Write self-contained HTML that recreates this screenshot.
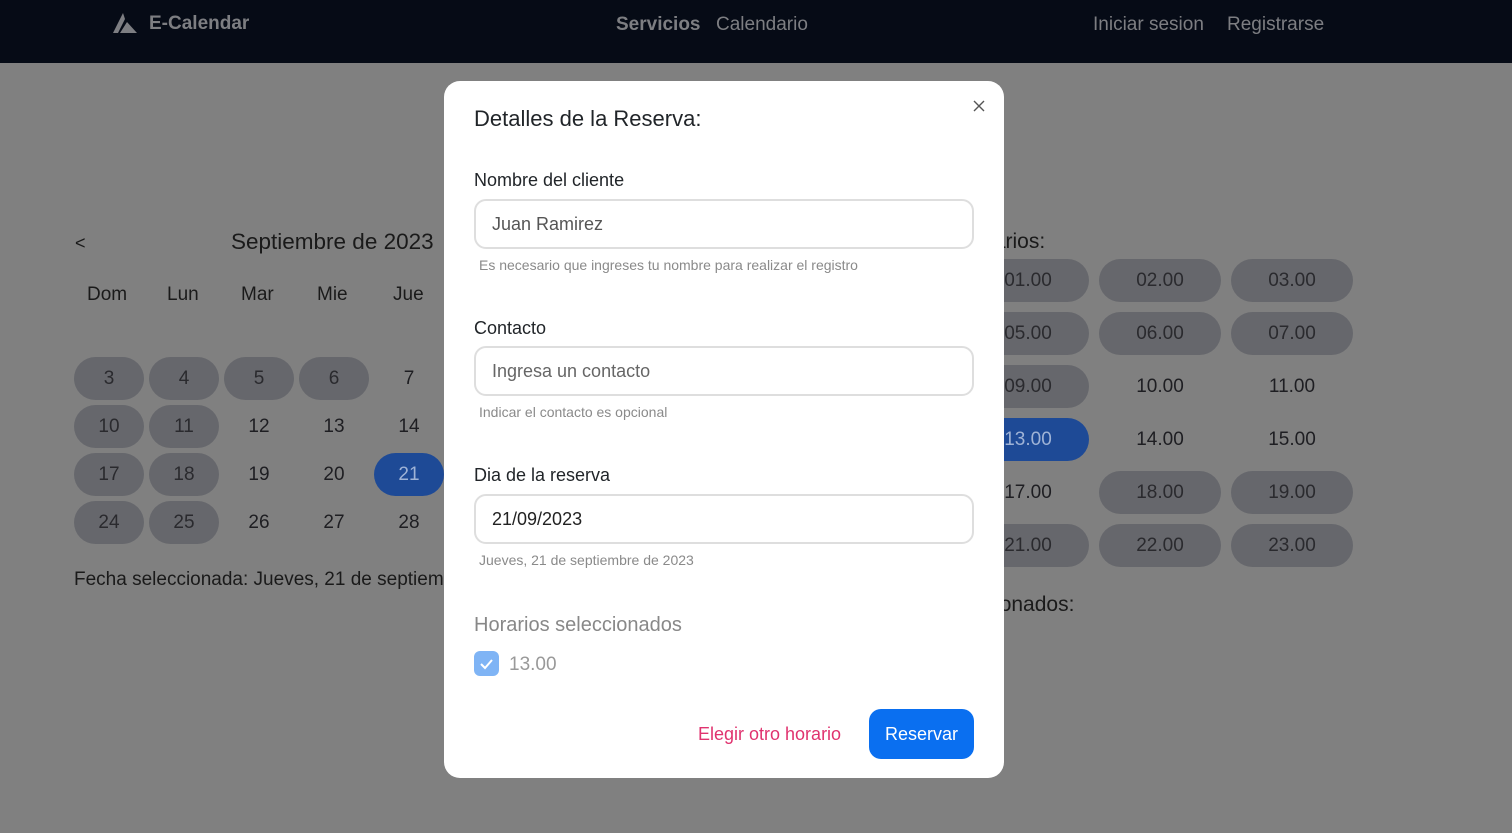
<!DOCTYPE html>
<html><head><meta charset="utf-8"><style>
*{box-sizing:border-box;margin:0;padding:0}
body{width:1512px;height:833px;overflow:hidden;background:#808080;font-family:"Liberation Sans",sans-serif;position:relative;color:#1a1a1a}
.nav{position:absolute;left:0;top:0;width:1512px;height:63px;background:#060b16;color:#7d7e82;font-size:19px}
.nav span{position:absolute;top:14px}
.abs{position:absolute}
.pill{position:absolute;border-radius:22px;background:#66676c;display:flex;align-items:center;justify-content:center;font-size:19px;color:#2a2a2e}
.plain{position:absolute;display:flex;align-items:center;justify-content:center;font-size:19px;color:#1e1e22}
.modal{position:absolute;left:444px;top:81px;width:560px;height:697px;background:#fff;border-radius:16px}
.lbl{position:absolute;left:30px;font-size:18px;color:#212529}
.inp{position:absolute;left:30px;width:500px;height:50px;border:2px solid #dedede;border-radius:12px;font-size:18px;padding-left:16px;display:flex;align-items:center;color:#555}
.help{position:absolute;left:35px;font-size:14px;color:#8a8a8a}
</style></head><body>
<div class="nav">
<svg class="abs" style="left:113px;top:13px" width="26" height="22" viewBox="0 0 26 22"><path d="M10 0L0 20h5L12 6z" fill="#7d7e82"/><path d="M14 9l-7 11h17z" fill="#7d7e82"/></svg>
<span style="left:149px;font-weight:bold;font-size:19px;top:13px">E-Calendar</span>
<span style="left:616px;font-weight:bold;font-size:19px">Servicios</span>
<span style="left:716px">Calendario</span>
<span style="left:1093px">Iniciar sesion</span>
<span style="left:1227px">Registrarse</span>
</div>
<div class="abs" style="left:75px;top:233px;font-size:18px">&lt;</div>
<div class="abs" style="left:231px;top:229px;font-size:22.5px">Septiembre de 2023</div>
<div class="abs" style="left:87px;top:284px;font-size:19px">Dom</div>
<div class="abs" style="left:167px;top:284px;font-size:19px">Lun</div>
<div class="abs" style="left:241px;top:284px;font-size:19px">Mar</div>
<div class="abs" style="left:317px;top:284px;font-size:19px">Mie</div>
<div class="abs" style="left:393px;top:284px;font-size:19px">Jue</div>
<div class="pill" style="left:74px;top:357px;width:70px;height:43px">3</div>
<div class="pill" style="left:149px;top:357px;width:70px;height:43px">4</div>
<div class="pill" style="left:224px;top:357px;width:70px;height:43px">5</div>
<div class="pill" style="left:299px;top:357px;width:70px;height:43px">6</div>
<div class="plain" style="left:374px;top:357px;width:70px;height:43px">7</div>
<div class="pill" style="left:74px;top:405px;width:70px;height:43px">10</div>
<div class="pill" style="left:149px;top:405px;width:70px;height:43px">11</div>
<div class="plain" style="left:224px;top:405px;width:70px;height:43px">12</div>
<div class="plain" style="left:299px;top:405px;width:70px;height:43px">13</div>
<div class="plain" style="left:374px;top:405px;width:70px;height:43px">14</div>
<div class="pill" style="left:74px;top:453px;width:70px;height:43px">17</div>
<div class="pill" style="left:149px;top:453px;width:70px;height:43px">18</div>
<div class="plain" style="left:224px;top:453px;width:70px;height:43px">19</div>
<div class="plain" style="left:299px;top:453px;width:70px;height:43px">20</div>
<div class="pill" style="left:374px;top:453px;width:70px;height:43px;background:#1e4a96;color:#9fb3d6">21</div>
<div class="pill" style="left:74px;top:501px;width:70px;height:43px">24</div>
<div class="pill" style="left:149px;top:501px;width:70px;height:43px">25</div>
<div class="plain" style="left:224px;top:501px;width:70px;height:43px">26</div>
<div class="plain" style="left:299px;top:501px;width:70px;height:43px">27</div>
<div class="plain" style="left:374px;top:501px;width:70px;height:43px">28</div>
<div class="abs" style="left:74px;top:569px;font-size:19px">Fecha seleccionada: Jueves, 21 de septiembre</div>
<div class="abs" style="left:960px;top:230px;font-size:21px">Horarios:</div>
<div class="pill" style="left:967px;top:259px;width:122px;height:43px">01.00</div>
<div class="pill" style="left:1099px;top:259px;width:122px;height:43px">02.00</div>
<div class="pill" style="left:1231px;top:259px;width:122px;height:43px">03.00</div>
<div class="pill" style="left:967px;top:312px;width:122px;height:43px">05.00</div>
<div class="pill" style="left:1099px;top:312px;width:122px;height:43px">06.00</div>
<div class="pill" style="left:1231px;top:312px;width:122px;height:43px">07.00</div>
<div class="pill" style="left:967px;top:365px;width:122px;height:43px">09.00</div>
<div class="plain" style="left:1099px;top:365px;width:122px;height:43px">10.00</div>
<div class="plain" style="left:1231px;top:365px;width:122px;height:43px">11.00</div>
<div class="pill" style="left:967px;top:418px;width:122px;height:43px;background:#1e4a96;color:#9fb3d6">13.00</div>
<div class="plain" style="left:1099px;top:418px;width:122px;height:43px">14.00</div>
<div class="plain" style="left:1231px;top:418px;width:122px;height:43px">15.00</div>
<div class="plain" style="left:967px;top:471px;width:122px;height:43px">17.00</div>
<div class="pill" style="left:1099px;top:471px;width:122px;height:43px">18.00</div>
<div class="pill" style="left:1231px;top:471px;width:122px;height:43px">19.00</div>
<div class="pill" style="left:967px;top:524px;width:122px;height:43px">21.00</div>
<div class="pill" style="left:1099px;top:524px;width:122px;height:43px">22.00</div>
<div class="pill" style="left:1231px;top:524px;width:122px;height:43px">23.00</div>
<div class="abs" style="left:932px;top:593px;font-size:21px">Seleccionados:</div>

<div class="modal">
<div class="abs" style="left:30px;top:25px;font-size:22px;color:#212529">Detalles de la Reserva:</div>
<svg class="abs" style="left:529px;top:19px" width="12" height="12" viewBox="0 0 12 12"><path d="M1 1l10 10M11 1L1 11" stroke="#555" stroke-width="1.4"/></svg>
<div class="lbl" style="top:89px">Nombre del cliente</div>
<div class="inp" style="top:118px">Juan Ramirez</div>
<div class="help" style="top:176px">Es necesario que ingreses tu nombre para realizar el registro</div>
<div class="lbl" style="top:237px">Contacto</div>
<div class="inp" style="top:265px;color:#666">Ingresa un contacto</div>
<div class="help" style="top:323px">Indicar el contacto es opcional</div>
<div class="lbl" style="top:384px">Dia de la reserva</div>
<div class="inp" style="top:413px;color:#222">21/09/2023</div>
<div class="help" style="top:471px">Jueves, 21 de septiembre de 2023</div>
<div class="abs" style="left:30px;top:533px;font-size:20px;color:#888">Horarios seleccionados</div>
<div class="abs" style="left:30px;top:570px;width:25px;height:25px;border-radius:6px;background:#7fb4f5"><svg width="25" height="25" viewBox="0 0 25 25"><path d="M7 13l4 4 7-8" stroke="#fff" stroke-width="2" fill="none"/></svg></div>
<div class="abs" style="left:65px;top:573px;font-size:19px;color:#999">13.00</div>
<div class="abs" style="left:254px;top:643px;font-size:18px;color:#e0336f">Elegir otro horario</div>
<div class="abs" style="left:425px;top:628px;width:105px;height:50px;border-radius:12px;background:#0a6ff0;color:#fff;font-size:18px;display:flex;align-items:center;justify-content:center">Reservar</div>
</div>
</body></html>
